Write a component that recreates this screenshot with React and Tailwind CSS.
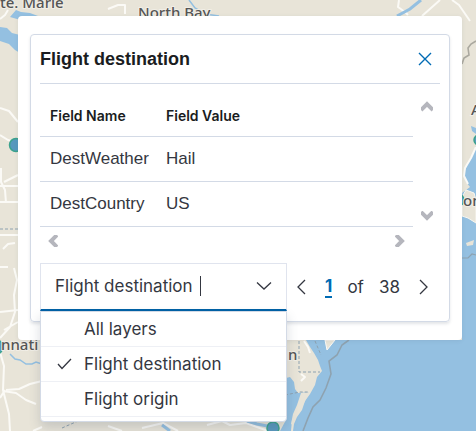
import React, { useState } from "react";

const land = "#e8e4d8";
const water = "#94c0e1";

function MapBackground() {
  return (
    <svg
      className="absolute inset-0 h-full w-full"
      viewBox="0 0 476 431"
      preserveAspectRatio="xMinYMin slice"
      aria-label="Map"
      role="img"
    >
      <rect width="476" height="431" fill={land} />
      <g fill={water}>
        <path d="M0 27 L7 28 L12 33 L20 35 V53 L15 50 L9 44 L0 41Z" />
        <path d="M10 17 L16 10 L21 12 L30 13 L38 16 L20 20 L17 19Z" />
        <path d="M476 146 L472 155 L468 163 L464 173 L466 182 L470 187 L462 193 V340 H306 L310 347 L314 353 L318 360 L320 366 L322 371 L317 377 L315 385 L310 394 L305 401 L302 410 L297 417 L294 424 L293 431 H476Z" />
        <path d="M471 126 L476 128 V134 L472 131Z" />
        <path d="M286 378 L290 377 L294 382 L295 389 L298 393 L309 392 L302 400 L297 408 L292 420 L291 431 H280 L286 420Z" />
      </g>
      <g fill={land}>
        <path d="M462 197 L466 190 L474 193 L476 200 V223 L468 218 L462 216Z" stroke="#f8f7f1" />
        <path d="M466 243 L474 240 L473 245 L467 246Z" />
        <path d="M325 340 L335 340 L327 350Z" stroke="#fbfaf6" />
        <path d="M301 393 L309 392 L306 399 L301 409 L296 416 L293 425 L291 424 L293 414 L297 405Z" />
      </g>
      <g fill="none" stroke="#fbfaf6" strokeWidth="2" strokeLinejoin="round">
        <path d="M0 19 L5 15 L8 10" />
        <path d="M0 108 L9 111 L18 122" />
        <path d="M0 135 L8 140 L18 143" />
        <path d="M1 168 V182 L5 190 L6 203 M0 186 L18 186 M4 182 L18 175 M0 202 L18 202" />
        <path d="M0 235 H18 M3 249 L8 244 L15 243 M0 267 H8 M14 268 L17 280 L14 295 L15 312 L10 327 L0 338 M0 312 L18 310 M4 330 L18 322" />
        <path d="M0 352 L4 366 L3 390 L9 414 L10 431 M3 391 L16 393 L26 400 L36 404 M6 390 L19 389 L30 384 L42 381 M5 390 L0 398 M33 431 L42 427" />
        <path d="M108 9 L118 5 L125 5 V14" />
        <path d="M399 0 L398 7 L405 12 L408 15 M422 16 L440 0 M452 0 L459 5 L470 21" />
        <path d="M476 147 L471 158 L465 168 L464 176 L468 184" />
        <path d="M304 341 L308 347 L310 353 M301 374 L305 377 L301 381" />
        <path d="M108 426 L122 431 M142 428 L163 423 L178 431 M207 425 L222 421 L230 425 L246 423 L268 431" />
      </g>
      <g fill="none" stroke={water} strokeWidth="1.5">
        <path d="M189 0 L195 8 L205 14 L219 16" />
        <path d="M397 16 L410 9 L421 0" strokeWidth="3" />
        <path d="M10 354 L15 359 L20 360 L26 364 L32 364 L36 362 L42 364" />
        <path d="M162 425 L170 431" strokeWidth="3" />
        <path d="M247 421 L257 424 L267 426 L273 425" strokeWidth="3" />
      </g>
      <g fill="none" stroke="#8ea2b0" strokeWidth="1.2">
        <path d="M462 64 L464 58 L469 55 L468 48 L471 44 L476 41" stroke="#aaa89f" strokeWidth="1.6" />
        <path d="M462 258 H468 L472 254 L476 255" />
        <path d="M349 340 L342 345 L337 355 L329 361 L331 374 L326 388 L320 400 L313 407 L308 418 L303 431" strokeWidth="1.6" />
        <path d="M0 229 H18 M299 341 V372 H320 M285 395 L300 392 H309 M315 341 L321 355 M62 428 L78 421" strokeDasharray="3 2" strokeWidth="1" />
      </g>
      <g fill="#5898be" stroke="#3ba28d" strokeWidth="1.5">
        <circle cx="16" cy="145" r="6.5" />
        <circle cx="-4" cy="347" r="7" />
        <circle cx="273" cy="428" r="6" />
        <circle cx="458" cy="200" r="6" />
        <circle cx="479" cy="140" r="5" />
      </g>
      <g
        fill="#555"
        stroke="#f1eee6"
        strokeWidth="2"
        paintOrder="stroke"
        fontFamily="Noto Sans, sans-serif"
        fontSize="15"
        fontWeight="500"
      >
        <text x="0" y="8">te. Marie</text>
        <text x="138" y="18">North Bay</text>
        <text x="1" y="350">nnati</text>
        <text x="288" y="360">n</text>
        <text x="471" y="115">A</text>
        <text x="463" y="206">on</text>
      </g>
    </svg>
  );
}

function Stroke({ d, w, h, className }) {
  return (
    <svg
      width={w}
      height={h}
      viewBox={`0 0 ${w} ${h}`}
      fill="none"
      stroke="currentColor"
      className={className}
      aria-hidden="true"
    >
      <path d={d} />
    </svg>
  );
}

const rows = [
  ["DestWeather", "Hail"],
  ["DestCountry", "US"],
];
const layers = ["All layers", "Flight destination", "Flight origin"];

function FeatureTable() {
  return (
    <div className="flex">
      <div className="min-w-0 flex-1">
        <table className="w-full border-collapse text-left font-['Liberation_Sans',Arial,sans-serif]">
          <thead>
            <tr className="h-13 border-b border-[#d3dae6] font-['Inter',sans-serif] text-sm text-[#1a1c21]">
              <th scope="col" className="w-[116px] pt-3 pl-2.5 font-semibold">Field Name</th>
              <th scope="col" className="pt-3 pl-2.5 font-semibold">Field Value</th>
            </tr>
          </thead>
          <tbody>
            {rows.map(([name, value]) => (
              <tr key={name} className="h-[45px] border-b border-[#d3dae6] text-[17px] leading-6 text-[#343741]">
                <td className="pl-2.5">{name}</td>
                <td className="pl-2.5">{value}</td>
              </tr>
            ))}
          </tbody>
        </table>
        <div className="flex h-7 items-center justify-between px-2 text-[#b5b6bd]">
          <button aria-label="Scroll left"><Stroke w={10} h={12} d="M9 0 L3 6 L9 12" className="stroke-4" /></button>
          <button aria-label="Scroll right"><Stroke w={10} h={12} d="M1 0 L7 6 L1 12" className="stroke-4" /></button>
        </div>
      </div>
      <div className="mb-8 flex w-[27px] flex-col items-center justify-between pt-4 text-[#b5b6bd]">
        <button aria-label="Scroll up"><Stroke w={12} h={12} d="M0 10 L6 4 L12 10" className="stroke-4" /></button>
        <button aria-label="Scroll down"><Stroke w={12} h={12} d="M0 1 L6 7 L12 1" className="stroke-4" /></button>
      </div>
    </div>
  );
}

function LayerPicker() {
  const [selected, setSelected] = useState("Flight destination");
  return (
    <div className="relative w-[247px]">
      <div className="flex h-12 items-center border border-b-2 border-[#e0e4ee] border-b-[#0061a6] pr-3.5 pl-3.5">
        <input
          role="combobox"
          aria-label="Layer"
          aria-expanded="true"
          aria-controls="layers"
          value={selected}
          onChange={(e) => setSelected(e.target.value)}
          className="w-[145px] outline-none"
        />
        <span className="h-5 w-px bg-[#343741]" />
        <button aria-label="Toggle layer list" className="ml-auto">
          <Stroke w={16} h={10} d="M1 1.5 L8 8 L15 1.5" className="stroke-[1.3]" />
        </button>
      </div>
      <ul
        id="layers"
        role="listbox"
        className="absolute inset-x-0 top-full rounded-b border border-[#d3dae6] bg-white pb-1 shadow-[0_6px_12px_rgba(65,78,101,0.2)]"
      >
        {layers.map((layer) => (
          <li
            key={layer}
            role="option"
            aria-selected={layer === selected}
            onClick={() => setSelected(layer)}
            className="flex h-[35px] items-center border-b border-[#eef0f5] pl-4"
          >
            <span className="w-[27px]">
              {layer === selected && (
                <Stroke w={15} h={12} d="M1 6 L5 10.5 L14 1" className="stroke-[1.3]" />
              )}
            </span>
            {layer}
          </li>
        ))}
      </ul>
    </div>
  );
}

export default function App() {
  return (
    <main className="relative min-h-screen overflow-hidden pt-4 pr-3.5 pb-[91px] pl-[18px] font-['Inter',sans-serif] text-[17px] leading-6 text-[#343741]">
      <MapBackground />
      <section className="relative rounded bg-white px-3 py-[18px] shadow-[0_1px_4px_rgba(65,78,101,0.1)]">
        <div className="rounded border border-[#d3dae6] px-[9px] pb-2.5 shadow-[0_2px_3px_rgba(65,78,101,0.15)]">
          <header className="flex h-[49px] items-center justify-between border-b border-[#d3dae6] pr-2">
            <h1 className="font-['Liberation_Sans',Arial,sans-serif] text-lg font-bold text-[#1a1c21]">
              Flight destination
            </h1>
            <button aria-label="Close" className="text-[#006bb4]">
              <Stroke w={14} h={14} d="M1 1 L13 13 M13 1 L1 13" className="stroke-[1.4]" />
            </button>
          </header>
          <FeatureTable />
          <div className="mt-2 flex items-center">
            <LayerPicker />
            <nav aria-label="Features" className="flex flex-1 items-center justify-between pr-3 pl-2.5">
              <button aria-label="Previous"><Stroke w={9} h={16} d="M8 1 L1 8 L8 15" className="stroke-[1.3]" /></button>
              <span className="flex items-center gap-[15px]">
                <span className="border-b-2 border-[#006bb4] leading-5 font-bold text-[#006bb4]">1</span>
                <span>of</span>
                <span>38</span>
              </span>
              <button aria-label="Next"><Stroke w={9} h={16} d="M1 1 L8 8 L1 15" className="stroke-[1.3]" /></button>
            </nav>
          </div>
        </div>
      </section>
    </main>
  );
}
